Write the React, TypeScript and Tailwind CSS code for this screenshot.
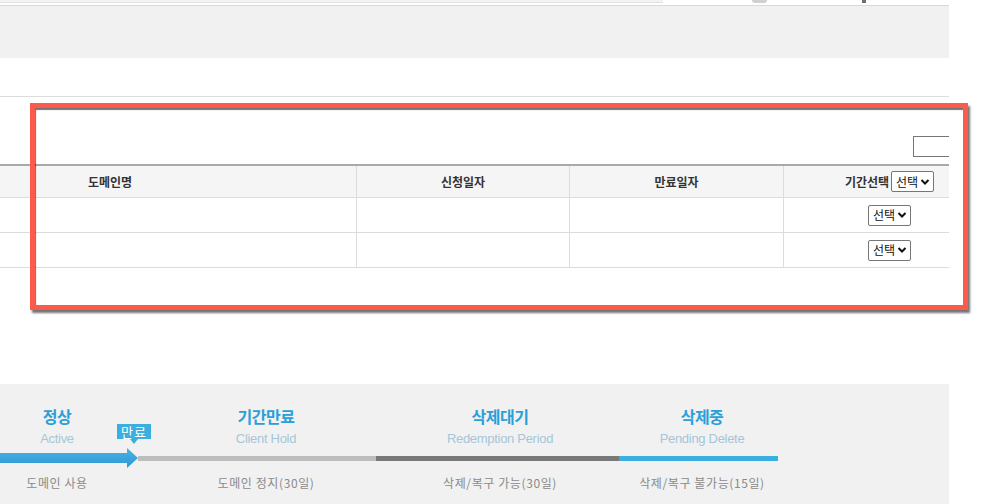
import React from "react";

function Sel() {
  return (
    <div className="flex h-[21px] w-[43px] items-center justify-between rounded-[2px] border border-[#767676] bg-white pl-[4px] pr-[3px] text-[12px] leading-none text-[#111]">
      <span>선택</span>
      <svg width="10" height="8" viewBox="0 0 10 8">
        <path d="M1.5 2 L5 5.5 L8.5 2" fill="none" stroke="#111" strokeWidth="2" />
      </svg>
    </div>
  );
}

export default function App() {
  const font = "font-['Noto_Sans_CJK_KR','Noto_Sans',sans-serif]";
  return (
    <div className={`relative h-[504px] w-[1002px] overflow-hidden bg-white ${font}`}>
      {/* top cut-off strip */}
      <div className="flex h-[5px] w-[949px] items-start">
        <div className="h-[3px] w-[663px] border-b border-[#e2e2e2] bg-[#f3f3f3]" />
        <div className="ml-[89px] h-[3px] w-[15px] rounded-b-full bg-[#d0d0d0]" />
        <div className="ml-[95px] h-[3px] w-[4px] bg-[#707070]" />
      </div>
      <div className="h-px w-[949px] bg-[#d9d9d9]" />
      <div className="h-[52px] w-[949px] bg-[#f1f1f1]" />
      <div className="h-[38px]" />
      <div className="h-px w-[949px] bg-[#dcdcdc]" />

      {/* table region */}
      <div className="w-[949px]">
        <div className="flex h-[67px] items-start justify-end pt-[39px]">
          <div className="h-[21px] w-[36px] border-y border-l border-[#767676] bg-white" />
        </div>
        <div className="border-t-2 border-[#a9a9a9]">
          <div className="grid h-[32px] grid-cols-[356px_213px_214px_166px] border-b border-[#dcdcdc] bg-[#f5f5f5] text-[12px] font-bold text-[#333]">
            <div className="flex items-center justify-center pr-[136px]">도메인명</div>
            <div className="flex items-center justify-center border-l border-[#dcdcdc]">신청일자</div>
            <div className="flex items-center justify-center border-l border-[#dcdcdc]">만료일자</div>
            <div className="flex items-center justify-center gap-[2px] border-l border-[#dcdcdc] pl-[46px]">
              <span>기간선택</span>
              <div className="font-normal">
                <Sel />
              </div>
            </div>
          </div>
          {[0, 1].map((i) => (
            <div
              key={i}
              className="grid h-[35px] grid-cols-[356px_213px_214px_166px] border-b border-[#dcdcdc]"
            >
              <div />
              <div className="border-l border-[#dcdcdc]" />
              <div className="border-l border-[#dcdcdc]" />
              <div className="flex items-center justify-center border-l border-[#dcdcdc] pl-[46px]">
                <Sel />
              </div>
            </div>
          ))}
        </div>
      </div>

      <div className="h-[116px]" />

      {/* lifecycle */}
      <div className="relative h-[120px] w-[949px] bg-[#f1f1f1] pt-[22px]">
        <div className="flex">
          {[
            ["정상", "Active", "w-[114px]"],
            ["기간만료", "Client Hold", "w-[304px]"],
            ["삭제대기", "Redemption Period", "w-[164px]"],
            ["삭제중", "Pending Delete", "w-[240px]"],
          ].map(([k, e, w]) => (
            <div key={k} className={`${w} flex flex-col items-center`}>
              <div className="h-[20px] text-[16px] font-bold leading-[20px] tracking-[-0.5px] text-[#2a9fd8]">
                {k}
              </div>
              <div className="mt-[5px] h-[16px] font-['Liberation_Sans',Arial,sans-serif] text-[13px] leading-[16px] tracking-[-0.3px] text-[#a6c6d8]">
                {e}
              </div>
            </div>
          ))}
        </div>
        <div className="mt-[1px] flex h-[20px] items-center">
          <svg width="138" height="20" viewBox="0 0 138 20">
            <defs>
              <linearGradient id="ab" x1="0" y1="0" x2="0" y2="1">
                <stop offset="0" stopColor="#46b6e6" />
                <stop offset="1" stopColor="#2f95d4" />
              </linearGradient>
            </defs>
            <path d="M0 5 H127 V0 L138 10 L127 20 V15 H0 Z" fill="url(#ab)" />
          </svg>
          <div className="h-[5px] w-[238px] bg-[#bdbdbd]" />
          <div className="h-[5px] w-[243px] bg-[#787878]" />
          <div className="h-[5px] w-[159px] bg-[#3aafe0]" />
        </div>
        <div className="mt-[7px] flex text-[12px] leading-[16px] tracking-[0.6px] text-[#8a8a8a]">
          <div className="w-[114px] text-center">도메인 사용</div>
          <div className="w-[304px] text-center">도메인 정지(30일)</div>
          <div className="w-[164px] text-center">삭제/복구 가능(30일)</div>
          <div className="w-[240px] text-center">삭제/복구 불가능(15일)</div>
        </div>
        <div className="absolute left-[117px] top-[40px] flex flex-col items-center">
          <div className="flex h-[15px] w-[34px] items-center justify-center bg-[#3aafe0] text-[13px] leading-none tracking-[1px] text-white">
            만료
          </div>
          <div className="h-0 w-0 border-x-[4px] border-t-[5px] border-x-transparent border-t-[#3aafe0]" />
        </div>
      </div>

      {/* red annotation box */}
      <div className="pointer-events-none absolute left-[30px] top-[103px] h-[207px] w-[938px] border-[5px] border-[#fe5a4b] shadow-[2px_3px_2px_rgba(0,0,0,0.55),inset_1px_2px_1px_rgba(0,0,0,0.55)]" />
    </div>
  );
}
